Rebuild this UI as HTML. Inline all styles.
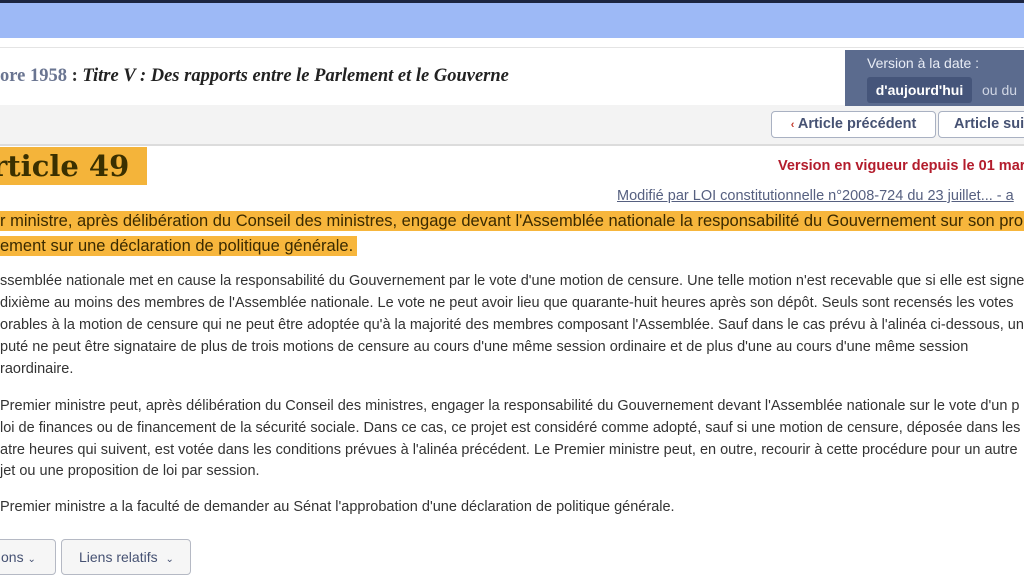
<!DOCTYPE html>
<html><head><meta charset="utf-8"><style>
*{margin:0;padding:0;box-sizing:border-box}
body{width:1024px;height:575px;overflow:hidden;position:relative;background:#fff;font-family:"Liberation Sans",sans-serif;color:#333}
.a{position:absolute;white-space:nowrap}
.l{position:absolute;white-space:nowrap;font-size:14.5px;line-height:22px;color:#333;left:0}
.hl{background:#f7b63c;color:#3a2a00}
</style></head><body>
<div class="a" style="top:0;left:0;width:1024px;height:3px;background:#1c2540"></div>
<div class="a" style="top:3px;left:0;width:1024px;height:35px;background:#9db9f6"></div>
<div class="a" style="top:47px;left:0;width:1024px;height:1px;background:#e4e4e4"></div>
<div class="a" style="top:105px;left:0;width:1024px;height:41px;background:#f3f3f3;border-bottom:2px solid #dcdcdc"></div>
<div class="a" style="top:66px;left:0;font-family:'Liberation Serif',serif;font-size:18.5px"><span style="color:#6a7591;font-family:'Liberation Serif',serif;font-weight:bold">ore 1958</span> <b>:</b> <b><i style="color:#222">Titre V : Des rapports entre le Parlement et le Gouverne</i></b></div>
<div class="a" style="top:50px;left:845px;width:179px;height:56px;background:#5b6b8e"></div>
<div class="a" style="top:55px;left:867px;color:#e8ecf5;font-size:14px">Version à la date :</div>
<div class="a" style="top:77px;left:867px;width:105px;height:26px;background:#45557a;border-radius:3px;color:#fff;font-weight:bold;font-size:14px;line-height:26px;text-align:center">d'aujourd'hui</div>
<div class="a" style="top:82px;left:982px;color:#d0d6e4;font-size:14px">ou du</div>
<div class="a" style="top:111px;left:771px;width:165px;height:27px;border:1px solid #a9b1c2;border-radius:4px;background:#fff;color:#465273;font-weight:bold;font-size:14.5px;line-height:25px;text-align:center"><span style="color:#c0392b;font-size:11px">‹</span> Article précédent</div>
<div class="a" style="top:111px;left:938px;width:110px;height:27px;border:1px solid #a9b1c2;border-radius:4px;background:#fff;color:#465273;font-weight:bold;font-size:14.5px;line-height:25px;padding-left:15px">Article suiv</div>
<div class="a" style="top:147px;left:0;width:147px;height:38px;background:#f4b43a;color:#3a3000;font-family:'DejaVu Serif',serif;font-weight:bold;font-size:29px;line-height:38px;text-indent:-8px">rticle 49</div>
<div class="a" style="top:158px;left:778px;color:#b31c2c;font-weight:bold;font-size:14.5px">Version en vigueur depuis le 01 mars</div>
<div class="a" style="top:188px;left:617px;color:#566080;font-size:14.5px;text-decoration:underline">Modifié par LOI constitutionnelle n°2008-724 du 23 juillet... - a</div>
<div class="l" style="top:210px;font-size:16.5px"><span class="hl" style="padding:1px 12px 1px 0">r ministre, après délibération du Conseil des ministres, engage devant l'Assemblée nationale la responsabilité du Gouvernement sur son pro</span></div>
<div class="l" style="top:235px;font-size:16.5px"><span class="hl" style="padding:1px 4px 1px 0">ement sur une déclaration de politique générale.</span></div>
<div class="l" style="top:270px">ssemblée nationale met en cause la responsabilité du Gouvernement par le vote d'une motion de censure. Une telle motion n'est recevable que si elle est signe</div>
<div class="l" style="top:292px">dixième au moins des membres de l'Assemblée nationale. Le vote ne peut avoir lieu que quarante-huit heures après son dépôt. Seuls sont recensés les votes</div>
<div class="l" style="top:314px">orables à la motion de censure qui ne peut être adoptée qu'à la majorité des membres composant l'Assemblée. Sauf dans le cas prévu à l'alinéa ci-dessous, un</div>
<div class="l" style="top:336px">puté ne peut être signataire de plus de trois motions de censure au cours d'une même session ordinaire et de plus d'une au cours d'une même session</div>
<div class="l" style="top:358px">raordinaire.</div>
<div class="l" style="top:395px">Premier ministre peut, après délibération du Conseil des ministres, engager la responsabilité du Gouvernement devant l'Assemblée nationale sur le vote d'un p</div>
<div class="l" style="top:417px">loi de finances ou de financement de la sécurité sociale. Dans ce cas, ce projet est considéré comme adopté, sauf si une motion de censure, déposée dans les v</div>
<div class="l" style="top:439px">atre heures qui suivent, est votée dans les conditions prévues à l'alinéa précédent. Le Premier ministre peut, en outre, recourir à cette procédure pour un autre</div>
<div class="l" style="top:460px">jet ou une proposition de loi par session.</div>
<div class="l" style="top:496px">Premier ministre a la faculté de demander au Sénat l'approbation d'une déclaration de politique générale.</div>
<div class="a" style="top:539px;left:-10px;width:66px;height:36px;border:1px solid #b5b9c4;border-radius:4px;background:#f6f6f6;color:#465273;font-size:14px;line-height:34px;padding-left:10px">ons <span style="font-size:10px">⌄</span></div>
<div class="a" style="top:539px;left:61px;width:130px;height:36px;border:1px solid #b5b9c4;border-radius:4px;background:#f6f6f6;color:#465273;font-size:14px;line-height:34px;padding-left:17px">Liens relatifs <span style="font-size:10px;margin-left:4px">⌄</span></div>
</body></html>
